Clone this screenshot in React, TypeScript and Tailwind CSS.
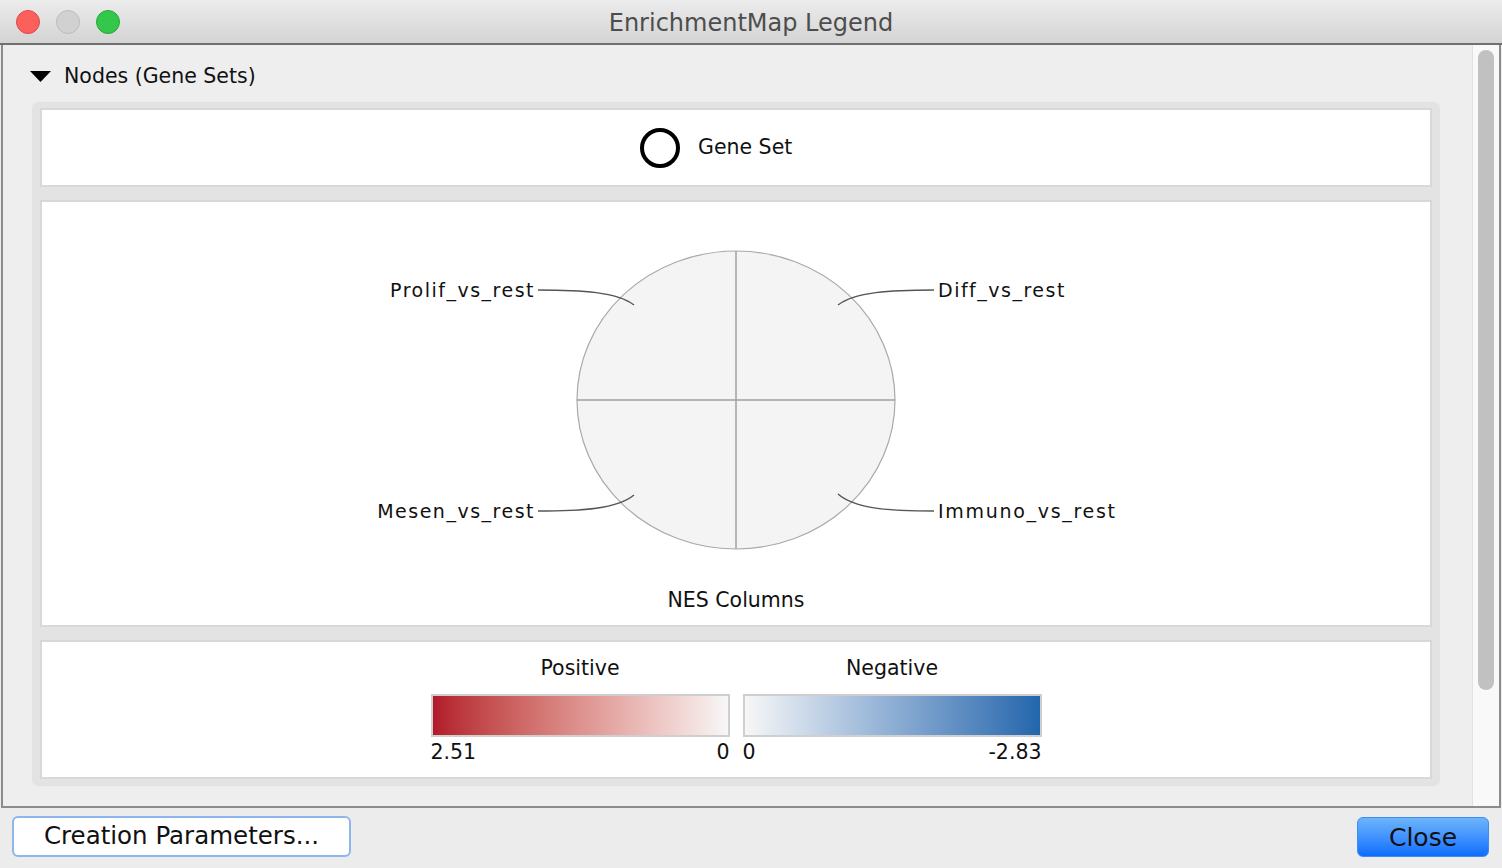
import React from "react";

function TrafficLights() {
  return (
    <div className="flex items-center gap-4 pl-4 pt-px">
      <span className="w-6 h-6 rounded-full bg-[#fc605c] border border-[#de4a45]" />
      <span className="w-6 h-6 rounded-full bg-[#d1d1d1] border border-[#bcbcbc]" />
      <span className="w-6 h-6 rounded-full bg-[#34c84a] border border-[#27a73b]" />
    </div>
  );
}

function PieChart() {
  const lbl = { fontSize: 19, letterSpacing: 1.5, fill: "#111" };
  return (
    <svg width="1388" height="386" className="block">
      <ellipse cx="694" cy="198" rx="159" ry="149" fill="#f4f4f4" stroke="#a9a9a9" strokeWidth="1.2" />
      <line x1="694" y1="49" x2="694" y2="347" stroke="#a0a0a0" strokeWidth="1.5" />
      <line x1="535" y1="198" x2="853" y2="198" stroke="#a0a0a0" strokeWidth="1.5" />
      <g fill="none" stroke="#555" strokeWidth="1.4">
        <path d="M496 88 C540 88 575 90 592 103" />
        <path d="M892 88 C848 88 813 90 796 103" />
        <path d="M496 309 C540 309 575 307 592 293" />
        <path d="M892 309 C848 309 813 307 796 292" />
      </g>
      <text x="493" y="88" textAnchor="end" dominantBaseline="central" style={lbl}>Prolif_vs_rest</text>
      <text x="896" y="88" textAnchor="start" dominantBaseline="central" style={lbl}>Diff_vs_rest</text>
      <text x="493" y="309" textAnchor="end" dominantBaseline="central" style={lbl}>Mesen_vs_rest</text>
      <text x="896" y="309" textAnchor="start" dominantBaseline="central" style={{ ...lbl, letterSpacing: 1.7 }}>Immuno_vs_rest</text>
    </svg>
  );
}

function ColorScale({ title, from, to, left, right }: { title: string; from: string; to: string; left: string; right: string }) {
  return (
    <div className="w-[299px] flex flex-col">
      <div className="text-center leading-[24px] text-[20.5px] mb-[14px]">{title}</div>
      <div className={`h-[43px] border-2 border-[#cfcfcf] bg-gradient-to-r ${from} ${to}`} />
      <div className="flex justify-between mt-[3px] leading-[24px] text-[20.5px]">
        <span>{left}</span>
        <span>{right}</span>
      </div>
    </div>
  );
}

export default function App() {
  return (
    <div className="w-[1502px] h-[868px] bg-[#ececec] flex flex-col font-['DejaVu_Sans',sans-serif] text-[#111]">
      <div className="h-[45px] shrink-0 rounded-t-[6px] bg-gradient-to-b from-[#ececec] to-[#d4d4d4] border-b-2 border-[#707070] grid grid-cols-[1fr_auto_1fr] items-center">
        <TrafficLights />
        <div className="text-[24px] text-[#4d4d4d] pt-[2px]">EnrichmentMap Legend</div>
        <div />
      </div>

      <div className="flex-1 flex mx-px border-x-2 border-b-2 border-[#8c8c8c] bg-[#eeeeee]">
        <div className="flex-1 flex flex-col">
          <div className="h-[57px] flex items-center pl-[27px] pt-[5px]">
            <svg width="21" height="11" viewBox="0 0 21 11" className="mr-[13px]">
              <polygon points="0,0 21,0 10.5,11" fill="#000" />
            </svg>
            <span className="text-[20.5px]">Nodes (Gene Sets)</span>
          </div>

          <div className="ml-[29px] w-[1408px] rounded-[6px] bg-[#e3e3e3] px-[8px] pt-[6px] pb-[7px] flex flex-col gap-[13px]">
            <div className="h-[79px] border-2 border-[#d8d8d8] bg-white flex items-center pl-[598px]">
              <span className="w-[40px] h-[40px] rounded-full border-4 border-black" />
              <span className="ml-[18px] text-[20.5px]">Gene Set</span>
            </div>

            <div className="h-[427px] border-2 border-[#d8d8d8] bg-white flex flex-col items-center">
              <PieChart />
              <div className="text-[20.5px] leading-[24px]">NES Columns</div>
            </div>

            <div className="h-[139px] border-2 border-[#d8d8d8] bg-white flex justify-center gap-[13px] pt-[14px]">
              <ColorScale title="Positive" from="from-[#b2182b]" to="to-[#f7f7f7]" left="2.51" right="0" />
              <ColorScale title="Negative" from="from-[#f7f7f7]" to="to-[#2166ac]" left="0" right="-2.83" />
            </div>
          </div>
        </div>

        <div className="w-[27px] shrink-0 bg-[#f9f9f9] border-l border-[#e2e2e2] pt-[5px] flex justify-center">
          <div className="w-[16px] h-[640px] rounded-full bg-[#c1c1c1]" />
        </div>
      </div>

      <div className="h-[60px] shrink-0 flex justify-between items-start pl-[12px] pr-[13px] pt-[8px]">
        <button className="w-[339px] h-[41px] rounded-[6px] bg-white border-2 border-[#8db6ee] text-[24.5px] leading-none">
          Creation Parameters...
        </button>
        <button className="mt-px w-[132px] h-[40px] rounded-[6px] bg-gradient-to-b from-[#6db4fb] to-[#0a6cfe] border border-[#3d8cf3] text-[25px] leading-none">
          Close
        </button>
      </div>
    </div>
  );
}
